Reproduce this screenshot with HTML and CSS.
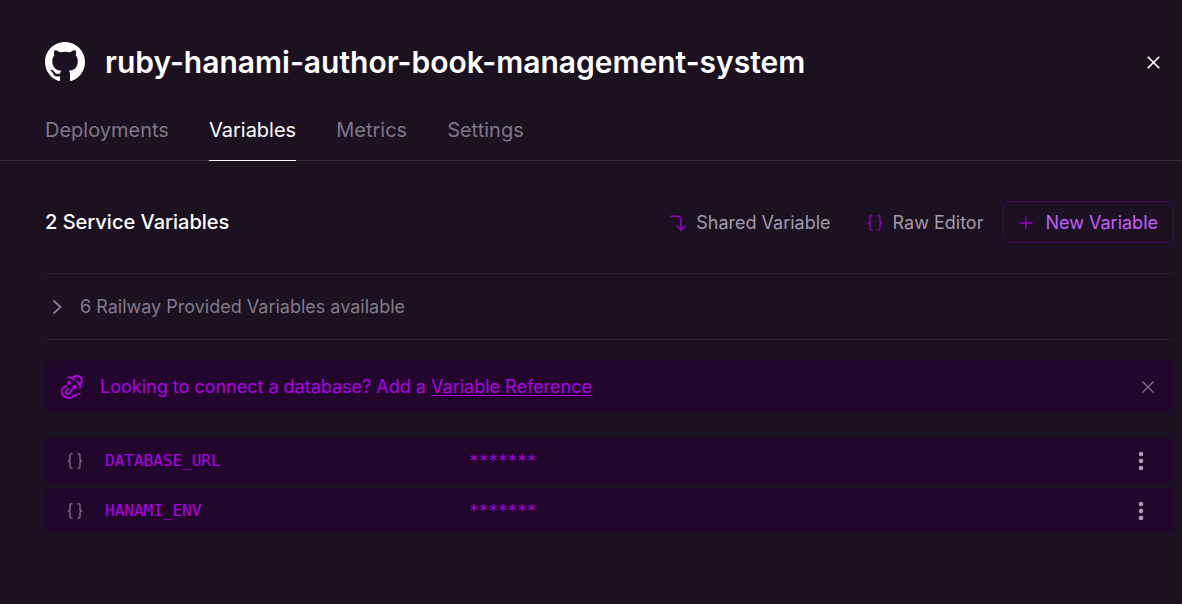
FILE: index.html
```html
<!DOCTYPE html>
<html lang="en">
<head>
<meta charset="utf-8">
<meta name="viewport" content="width=device-width, initial-scale=1">
<title>ruby-hanami-author-book-management-system</title>
<link rel="stylesheet" href="styles.css">
</head>
<body>
<header class="header">
  <svg class="logo" viewBox="0 0 16 16" aria-hidden="true"><path fill="currentColor" d="M8 0C3.58 0 0 3.58 0 8c0 3.54 2.29 6.53 5.47 7.59.4.07.55-.17.55-.38 0-.19-.01-.82-.01-1.49-2.01.37-2.53-.49-2.69-.94-.09-.23-.48-.94-.82-1.13-.28-.15-.68-.52-.01-.53.63-.01 1.08.58 1.23.82.72 1.21 1.87.87 2.33.66.07-.52.28-.87.51-1.07-1.78-.2-3.64-.89-3.64-3.95 0-.87.31-1.59.82-2.15-.08-.2-.36-1.02.08-2.12 0 0 .67-.21 2.2.82.64-.18 1.32-.27 2-.27s1.36.09 2 .27c1.53-1.04 2.2-.82 2.2-.82.44 1.1.16 1.92.08 2.12.51.56.82 1.27.82 2.15 0 3.07-1.87 3.75-3.65 3.95.29.25.54.73.54 1.48 0 1.07-.01 1.93-.01 2.2 0 .21.15.46.55.38A8.01 8.01 0 0 0 16 8c0-4.42-3.58-8-8-8z"/></svg>
  <h1 class="title">ruby-hanami-author-book-management-system</h1>
  <button class="icon-button close" type="button" aria-label="Close"><svg width="13" height="13" viewBox="0 0 12 12"><path d="M.7.7l10.6 10.6M11.3.7L.7 11.3" stroke-width="1.6"/></svg></button>
</header>
<nav class="tabs">
  <a class="tab" href="#deployments">Deployments</a>
  <a class="tab tab-active" href="#variables" aria-current="page">Variables</a>
  <a class="tab" href="#metrics">Metrics</a>
  <a class="tab" href="#settings">Settings</a>
</nav>
<main class="content">
  <div class="toolbar">
    <h2 class="subtitle">2 Service Variables</h2>
    <div class="actions">
      <button class="action" type="button"><svg width="16" height="16" viewBox="0 0 16 16"><path d="M.5 1.2H7q4 0 4 4V15M6.500 10.500L11 15l4.500-4.500" stroke-width="1.500"/></svg>Shared Variable</button>
      <button class="action" type="button"><svg width="16" height="16" viewBox="0 0 16 16"><path d="M5.500.8H4.500Q3 .8 3 2.500V6Q3 8 .8 8 3 8 3 10v3.500q0 1.700 1.500 1.700h1M10.500.8h1Q13 .8 13 2.500V6q0 2 2.200 2Q13 8 13 10v3.500q0 1.700-1.500 1.700h-1" stroke-width="1.300"/></svg>Raw Editor</button>
      <button class="action action-new" type="button"><svg width="14" height="14" viewBox="0 0 14 14"><path d="M7 .5v13M.5 7h13" stroke-width="1.300"/></svg>New Variable</button>
    </div>
  </div>
  <button class="provided" type="button" aria-expanded="false"><svg width="10" height="16" viewBox="0 0 10 16"><path d="M1.500 1.500L8.500 8l-7 6.500" stroke-width="1.900"/></svg>6 Railway Provided Variables available</button>
  <div class="banner">
    <svg class="banner-icon" width="22" height="24" viewBox="0 0 22 24"><path d="M7 2.500C9.500 2 11.500 3 13 5M11.500 3.500C13 0 19.500.1 20.600 4.300c.7 2.700-1 4.700-3 5.100M15.500 6.500c3.500 1 4.500 4 3.500 6.500M5.800 10.800C1 11.500-.6 16.500 1.700 20c2.500 3.800 8 3.800 11 1 1.800-1.700 3.700-2.300 6-1.800M7.500 14C4.500 15 4 18.500 6.300 19c2.800.5 2.800-3.200 5.200-4.500" stroke-width="1.800" stroke-linecap="round"/><circle cx="8" cy="7.700" r="2" fill="currentColor" stroke="none"/><circle cx="13.500" cy="12" r="2.200" fill="currentColor" stroke="none"/></svg>
    <p class="banner-text">Looking to connect a database? Add a <a class="reference" href="#reference">Variable Reference</a></p>
    <button class="icon-button dismiss" type="button" aria-label="Dismiss"><svg width="12" height="12" viewBox="0 0 12 12"><path d="M.5.5l11 11M11.500.5l-11 11" stroke-width="1.300"/></svg></button>
  </div>
  <ul class="variables">
    <li class="variable">
      <svg class="braces" width="16" height="16" viewBox="0 0 16 16"><path d="M5.500.8H4.500Q3 .8 3 2.500V6Q3 8 .8 8 3 8 3 10v3.500q0 1.700 1.500 1.700h1M10.500.8h1Q13 .8 13 2.500V6q0 2 2.200 2Q13 8 13 10v3.500q0 1.700-1.500 1.700h-1" stroke-width="1.500"/></svg>
      <span>DATABASE_URL</span><span>*******</span>
      <button class="icon-button more" type="button" aria-label="DATABASE_URL options"><svg width="6" height="20" viewBox="0 0 6 20"><g fill="currentColor" stroke="none"><circle cx="3" cy="3" r="2.300"/><circle cx="3" cy="10" r="2.300"/><circle cx="3" cy="17" r="2.300"/></g></svg></button>
    </li>
    <li class="variable">
      <svg class="braces" width="16" height="16" viewBox="0 0 16 16"><path d="M5.500.8H4.500Q3 .8 3 2.500V6Q3 8 .8 8 3 8 3 10v3.500q0 1.700 1.500 1.700h1M10.500.8h1Q13 .8 13 2.500V6q0 2 2.200 2Q13 8 13 10v3.500q0 1.700-1.500 1.700h-1" stroke-width="1.500"/></svg>
      <span>HANAMI_ENV</span><span>*******</span>
      <button class="icon-button more" type="button" aria-label="HANAMI_ENV options"><svg width="6" height="20" viewBox="0 0 6 20"><g fill="currentColor" stroke="none"><circle cx="3" cy="3" r="2.300"/><circle cx="3" cy="10" r="2.300"/><circle cx="3" cy="17" r="2.300"/></g></svg></button>
    </li>
  </ul>
</main>
</body>
</html>
```
FILE: styles.css
```css
* { box-sizing: border-box; }

body {
  margin: 0;
  min-height: 100vh;
  background: #1b1120;
  color: #fff;
  font: 18px/24px Inter, sans-serif;
}

button {
  background: none;
  border: 0;
  padding: 0;
  color: inherit;
  font: inherit;
  cursor: pointer;
}

svg { display: block; flex: none; fill: none; stroke: currentColor; }

.header {
  display: flex;
  align-items: center;
  gap: 20px;
  padding: 42px 19px 0 45px;
}

.logo { width: 40px; height: 40px; stroke: none; }

.title { flex: 1; margin: 0; font-size: 30px; font-weight: 600; line-height: 40px; }

.icon-button { display: flex; align-items: center; justify-content: center; }

.close { width: 20px; height: 20px; }

.tabs {
  display: flex;
  gap: 40px;
  padding: 36px 45px 0;
  border-bottom: 1px solid #362d3d;
}

.tab {
  margin-bottom: -1px;
  padding-bottom: 18px;
  border-bottom: 1px solid transparent;
  color: #7f7788;
  font-size: 20px;
  text-decoration: none;
}

.tab-active { color: #fff; border-color: #fff; }

.content { padding: 40px 8px 0 45px; }

.toolbar {
  display: flex;
  align-items: center;
  justify-content: space-between;
  padding-bottom: 30px;
}

.subtitle { margin: 0; font-size: 20px; font-weight: 500; }

.actions { display: flex; gap: 20px; }

.action {
  display: flex;
  align-items: center;
  gap: 10px;
  height: 42px;
  padding: 2px 0 0 16px;
  color: #a29bad;
}

.action svg { color: #9600cf; }

.action-new {
  gap: 12px;
  padding: 2px 15px 0;
  border: 1px solid #43085a;
  border-radius: 8px;
  color: #c45eff;
}

.provided {
  display: flex;
  align-items: center;
  gap: 18px;
  width: 100%;
  height: 67px;
  padding: 0 7px;
  border: solid #291e30;
  border-width: 1px 0;
  color: #827a8c;
}

.banner {
  display: flex;
  align-items: center;
  gap: 17px;
  margin: 20px 0 25px;
  padding: 15px 16px 14px;
  border-radius: 8px;
  background: #22062b;
  color: #b000e8;
}

.banner-text { flex: 1; margin: 0; }

.reference { color: inherit; text-underline-offset: 2px; }

.dismiss { width: 20px; height: 20px; color: #817588; }

.variables { display: grid; gap: 5px; margin: 0; padding: 0; list-style: none; }

.variable {
  display: grid;
  grid-template-columns: 38px 364px 1fr 20px;
  align-items: center;
  height: 45px;
  padding: 0 23px 0 22px;
  border-radius: 6px;
  background: #22062b;
  color: #b000e8;
  font: 16px/24px "DejaVu Sans Mono", monospace;
}

.braces { color: #76697e; }

.more { height: 24px; color: #aaa0b0; }
```
